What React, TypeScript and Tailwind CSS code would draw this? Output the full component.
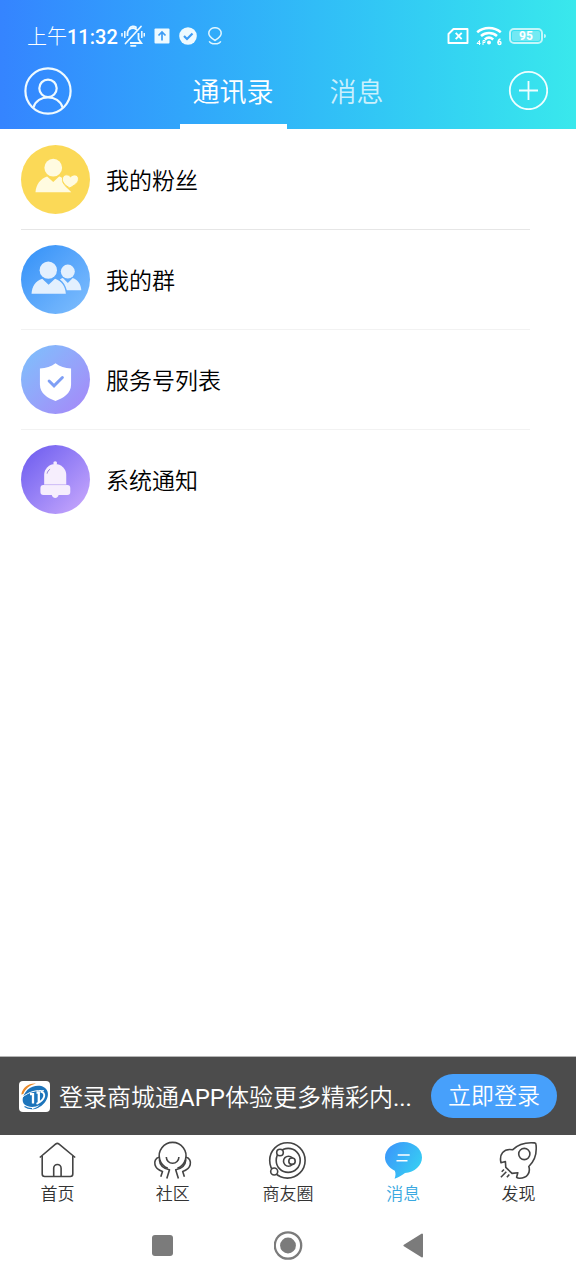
import type { ReactNode } from "react";

function MutedBell() {
  return (
    <svg className="ml-[3px] h-6 w-6" viewBox="0 0 24 24" fill="none" stroke="#effaff" strokeWidth="1.8">
      <path d="M6.500 12V9.500A5.500 5.500 0 0 1 16 5.800M17.500 9v6l2.800 4H9" />
      <path d="M8.500 4.200C10 2.300 13 1.800 15 3.200M20 2.500 4.500 19.500" strokeLinecap="round" />
      <path d="M10 21.800h4.500" strokeLinecap="round" />
      <path d="M3.800 7v7M20.800 7v7M1 9v3.500M23.300 9v3.500" strokeWidth="1.500" />
    </svg>
  );
}

function StatusBar() {
  return (
    <div className="flex h-6 items-center pl-[27px] pr-[30px] text-white">
      <span className="whitespace-nowrap pt-[2px] text-[20px] font-medium leading-6">
        <span className="font-light">上午</span>11:32
      </span>
      <MutedBell />
      <svg className="ml-[9px] h-4 w-4" viewBox="0 0 16 16">
        <rect x="0.500" y="0.500" width="15" height="15" rx="1" fill="#eefaff" />
        <path d="M8 12.500V4.500M4.500 7.500 8 4l3.500 3.500" stroke="#3d9cf5" strokeWidth="1.700" fill="none" />
      </svg>
      <svg className="ml-[9px] h-[18px] w-[18px]" viewBox="0 0 18 18">
        <circle cx="9" cy="9" r="8.800" fill="#eefaff" />
        <path d="m5 9 3 3 5.500-5.500" stroke="#3d9cf5" strokeWidth="2.200" fill="none" />
      </svg>
      <svg className="ml-[10px] h-[18px] w-4" viewBox="0 0 16 18" fill="none" stroke="#e0f6ff" strokeWidth="1.500">
        <path d="M8 13.500c-2-1.500-6.200-3.500-6.200-7.300a6.200 5.500 0 0 1 12.400 0c0 3.800-4.200 5.800-6.200 7.300z" />
        <path d="M2.300 14.200c1.200 3.500 10.200 3.500 11.400 0" />
      </svg>
      <div className="ml-auto flex items-center">
        <svg className="h-[18px] w-[22px]" viewBox="0 0 22 18" fill="none" stroke="white" strokeWidth="1.900">
          <path d="M6.500 2H20.500V16H1.500V7z" strokeLinejoin="round" />
          <path d="m8.700 5.800 6 6.400M14.700 5.800l-6 6.400" />
        </svg>
        <svg className="ml-[7px] h-5 w-[26px]" viewBox="0 0 26 20" fill="none" stroke="white" strokeWidth="2.500">
          <path d="M1.200 6.200c6.500-5.700 17.100-5.700 23.600 0M5 10c4.500-4 11.500-4 16 0M8.800 13.500c2.500-2.200 5.900-2.200 8.400 0" />
          <circle cx="13" cy="16.500" r="2" fill="white" stroke="none" />
          <path d="M3.500 19v-4.500L1 17.500h3.500M7 19v-4.500h2v2H7" strokeWidth="1" />
          <path d="M24.500 13c-1.800.5-2.500 2.200-2.500 4" strokeWidth="1.400" />
          <circle cx="23.500" cy="17" r="1.500" strokeWidth="1.400" />
        </svg>
        <div className="ml-[7px] flex items-center gap-px">
          <div className="flex h-4 w-[34px] rounded-[5px] border-2 border-white/70 p-px">
            <span className="flex flex-1 items-center justify-center rounded-[2px] bg-white/30 text-[12px] font-bold leading-none">
              95
            </span>
          </div>
          <span className="h-1 w-[2px] rounded-r bg-white/70" />
        </div>
      </div>
    </div>
  );
}

function Header() {
  return (
    <header className="bg-linear-to-r from-[#3584ff] to-[#39e8ec] pt-6">
      <StatusBar />
      <div className="grid h-[81px] grid-cols-[1fr_auto_1fr] pl-6 pr-6">
        <button aria-label="个人中心" className="mt-[19px] h-12 w-12">
          <svg viewBox="0 0 48 48" fill="none" stroke="#effaff" strokeWidth="2.200">
            <circle cx="24" cy="24" r="22.600" />
            <circle cx="24" cy="21.300" r="8.700" />
            <path d="M9.500 40.500c3.500-13.500 25.500-13.500 29 0" />
          </svg>
        </button>
        <nav className="flex gap-[30px] text-[27px] leading-9 text-white">
          <button className="border-b-[5px] border-white px-[13px] pt-[14px] font-[350]">通讯录</button>
          <button className="border-b-[5px] border-transparent px-[13px] pt-[14px] font-[350] text-white/75">消息</button>
        </nav>
        <button aria-label="添加" className="mr-1 mt-[22px] h-10 w-10 justify-self-end">
          <svg viewBox="0 0 40 40" fill="none" stroke="#effeff" strokeWidth="1.800">
            <circle cx="20.500" cy="20.500" r="18.700" />
            <path d="M20.500 11v19M11 20.500h19" />
          </svg>
        </button>
      </div>
    </header>
  );
}

function FansIcon() {
  return (
    <svg viewBox="0 0 70 70" fill="#fffbe0">
      <circle cx="32.700" cy="23" r="9" />
      <path d="M14.700 48c.5-7.500 5-14 11.800-16l6.200 5.500 6-5.500c1.500.4 2.500 1 3.300 1.700-1.500 6 4 8.500 9 14.300z" />
      <path
        d="M49.500 43.500c-4-2-7.500-5-7.500-8.800 0-4.700 5.800-6 8.300-2.300 2.700-3.500 8-2.300 8 2 0 4-4.300 6.600-8.800 9.100z"
        stroke="#fbd957"
        strokeWidth="1"
      />
    </svg>
  );
}

function GroupIcon() {
  return (
    <svg viewBox="0 0 70 70" fill="#e3f0fe">
      <circle cx="27.700" cy="25.500" r="8.800" />
      <path d="M10.700 49.500c.5-7.500 4-13 10.800-15.200l6.500 6 6.500-6c6.700 2.200 10.500 7.700 11 15.200z" />
      <circle cx="47.500" cy="27" r="7.100" />
      <path d="M39.500 35c1-.7 2-1.200 3-1.500l5 5 5-5c5 1.500 8.300 6.200 8.700 12.500H46.500c-1.200-5-3.500-8.500-7-11z" />
    </svg>
  );
}

function ShieldIcon() {
  return (
    <svg viewBox="0 0 70 70" fill="none">
      <path
        d="M35 18.500c4.500 3.500 9.500 5 15.800 5.300V40c0 9-8 14-15.800 16.700C27.200 54 19.200 49 19.200 40V23.800C25.500 23.500 30.500 22 35 18.500z"
        fill="white"
      />
      <path d="m28.500 36.500 5 5 8.500-8.500" stroke="#7f9ff5" strokeWidth="3" strokeLinecap="round" />
    </svg>
  );
}

function BellIcon() {
  return (
    <svg viewBox="0 0 70 70" fill="#f6eefd">
      <circle cx="34.700" cy="18.300" r="1.900" />
      <path d="M23.500 40V30.500a11.200 11.200 0 0 1 22.400 0V40z" />
      <rect x="19.700" y="40.600" width="30.300" height="10" rx="3" />
      <path d="M31.200 50.500h7c-.3 4.200-6.700 4.200-7 0z" />
      <path d="M26.500 29c.3-2 1.500-3.500 3-4.500" stroke="#9b86d8" strokeWidth="1" fill="none" />
      <path d="M23.500 40.300h22.400" stroke="#d9c7f5" strokeWidth="0.800" />
    </svg>
  );
}

const contacts: { label: string; tint: string; icon: ReactNode }[] = [
  { label: "我的粉丝", tint: "bg-[#fbd957]", icon: <FansIcon /> },
  { label: "我的群", tint: "bg-linear-to-br from-[#2f90f8] to-[#80befd]", icon: <GroupIcon /> },
  { label: "服务号列表", tint: "bg-linear-to-br from-[#79c2fc] to-[#a585f8]", icon: <ShieldIcon /> },
  { label: "系统通知", tint: "bg-linear-to-br from-[#6b57ee] to-[#cdaafc]", icon: <BellIcon /> },
];

function HomeIcon() {
  return (
    <>
      <path d="M.8 15.500 16.500 2.200q1.800-1.500 3.600 0L36.200 15.500" />
      <path d="M3.200 14v18q0 2.500 2.500 2.500h25.600q2.500 0 2.500-2.500V14M14.700 34.500v-8.300a3.700 3.700 0 0 1 7.400 0v8.300" />
    </>
  );
}

function CommunityIcon() {
  return (
    <>
      <path d="M13.800 26.300a13.400 13.400 0 1 1 9.600 0" />
      <path d="M12.300 15a6.200 6.200 0 0 0 12.600 0" />
      <path d="M5.300 15.300C1.300 16 .2 19.500 1 22.800c.9 3.500 3.500 5.500 7.500 6.700L6.800 34.800" />
      <path d="M5.300 17.500c.3 4.500 3.200 9 10.200 10.300l-2.700 8.700" />
      <path d="M31.900 15.300c4 .7 5.100 4.200 4.300 7.500-.9 3.500-3.500 5.500-7.500 6.700l1.700 5.300" />
      <path d="M31.900 17.500c-.3 4.500-3.200 9-10.200 10.300l2.700 8.700" />
    </>
  );
}

function CircleIcon() {
  return (
    <>
      <circle cx="18.400" cy="18.400" r="17.700" />
      <circle cx="19.200" cy="18.400" r="12" />
      <circle cx="19.500" cy="19.200" r="5" />
      <circle cx="23" cy="19.200" r="3.200" fill="white" />
      <circle cx="11" cy="10.500" r="3.300" fill="white" />
      <circle cx="5.200" cy="29.500" r="3.500" fill="white" />
    </>
  );
}

function MessageIcon() {
  return (
    <>
      <defs>
        <linearGradient id="bubble" x1="0" y1="0" x2="1" y2="0.600">
          <stop offset="0" stopColor="#3b92fb" />
          <stop offset="1" stopColor="#37cdf3" />
        </linearGradient>
      </defs>
      <path
        d="M18.500 0C8.300 0 0 6.900 0 15.500c0 5.500 4 10.300 9.800 13.200 1.100 2.500.9 5-.2 8 4.400-1.700 7.800-3.600 10.400-5.700C29.500 30.300 37 23.700 37 15.500 37 6.900 28.700 0 18.500 0z"
        fill="url(#bubble)"
        stroke="none"
      />
      <path d="M12.700 13h12M11.500 18.700h11" stroke="white" strokeWidth="1.500" />
    </>
  );
}

function RocketIcon() {
  return (
    <>
      <path d="M12.500 7.800C18.500 2 26.500.2 34.500.9q1.400.1 1.500 1.500C37 11 35.300 18.500 28.800 24.500c2 6.300-1.800 12-9.500 11.800q-1.600-.2-2.700-1l1.200-4.600-5.800.7-6.200-6-.4-5.900-4.400 1.300C-1 12.500 3.500 6.200 12.500 7.800z" />
      <circle cx="24.300" cy="12" r="5.600" />
      <path d="m4 27.500-2.300 2.300M6.300 29.800.9 35.300M9.300 32.500l-2.400 2.800" />
    </>
  );
}

const tabs: { label: string; active?: boolean; icon: ReactNode }[] = [
  { label: "首页", icon: <HomeIcon /> },
  { label: "社区", icon: <CommunityIcon /> },
  { label: "商友圈", icon: <CircleIcon /> },
  { label: "消息", active: true, icon: <MessageIcon /> },
  { label: "发现", icon: <RocketIcon /> },
];

function LoginBanner() {
  return (
    <aside className="flex h-[79px] items-center border-t border-[#b5b5b5] bg-[#4c4c4c] px-[19px]">
      <svg className="h-[31px] w-[31px] shrink-0" viewBox="0 0 31 31">
        <rect width="31" height="31" rx="4" fill="white" />
        <path d="M2.300 13.500C3.500 6 10 1.800 17 2.500 11 4 6.500 7.500 4.300 13z" fill="#e98a2b" />
        <path
          d="M8.500 8.800C15 3.200 26 3.300 28.500 10.500 31 19 21.500 28.500 12.500 28.300c3.500-.8 6-2.300 8.200-4.300-5 2.600-11.500 2.600-15.200-.5C2.500 20.500 3 15 8.500 8.800z"
          fill="#1c74bb"
        />
        <path d="M3 16.500C10 10.500 18 8.800 25 9.800" stroke="white" strokeWidth="1" fill="none" />
        <path d="M11 13.200h3v9.300M17.500 11.500h2.300V21" stroke="white" strokeWidth="2.300" fill="none" />
        <path d="M21.500 10.500c6 1 5 8.500-4 12.300" stroke="white" strokeWidth="1.900" fill="none" />
        <path d="M5.500 25.500c2.500 1.700 5 2.300 7.500 2.200" stroke="#1c74bb" strokeWidth="1.200" fill="none" />
      </svg>
      <p className="ml-[9px] flex-1 whitespace-nowrap pt-1 text-[24px] font-[350] leading-9 text-white">
        登录商城通<span className="font-normal">APP</span>体验更多精彩内<span className="font-normal">...</span>
      </p>
      <button className="h-11 shrink-0 rounded-full bg-[#47a0fb] px-[17px] pt-px text-[23px] font-[350] leading-none text-white">
        立即登录
      </button>
    </aside>
  );
}

function SystemNav() {
  return (
    <div className="flex h-[68px] items-center justify-center gap-[97px] pb-[2px]">
      <button aria-label="最近任务" className="flex h-[29px] w-[29px] items-center justify-center">
        <span className="h-[21px] w-[21px] rounded-[3px] bg-[#7b7b7b]" />
      </button>
      <button aria-label="主屏幕" className="h-[29px] w-[29px]">
        <svg viewBox="0 0 29 29">
          <circle cx="14" cy="14.500" r="13.200" fill="none" stroke="#7b7b7b" strokeWidth="2.300" />
          <circle cx="14" cy="14.500" r="7.900" fill="#7b7b7b" />
        </svg>
      </button>
      <button aria-label="返回" className="h-[29px] w-[29px]">
        <svg viewBox="0 0 29 29">
          <path d="M22 3.500v22L4.400 14.500z" fill="#7b7b7b" stroke="#7b7b7b" strokeWidth="2" strokeLinejoin="round" />
        </svg>
      </button>
    </div>
  );
}

export default function App() {
  return (
    <div className="flex min-h-screen flex-col bg-white font-[Roboto,'Noto_Sans_CJK_SC',sans-serif]">
      <Header />
      <main className="flex-1 pt-px">
        <ul className="ml-[21px] mr-[46px]">
          {contacts.map((c) => (
            <li key={c.label} className="border-b border-[#f2f2f2] first:border-[#e6e6e6] last:border-transparent">
              <a href="#" className="flex items-center gap-4 py-[15px]">
                <span className={`h-[69px] w-[69px] shrink-0 rounded-full ${c.tint}`}>{c.icon}</span>
                <span className="pt-1 text-[23px] font-[350] leading-8 text-black">{c.label}</span>
              </a>
            </li>
          ))}
        </ul>
      </main>
      <LoginBanner />
      <nav className="grid h-[77px] grid-cols-5 pt-[7px]">
        {tabs.map((t) => (
          <a key={t.label} href="#" className="flex flex-col items-center gap-[3px]">
            <svg
              className="h-[37px] w-[37px] overflow-visible"
              viewBox="0 0 37 37"
              fill="none"
              stroke="#444444"
              strokeWidth="1.600"
              strokeLinejoin="round"
            >
              {t.icon}
            </svg>
            <span className={`text-[17px] font-[350] leading-6 ${t.active ? "text-[#3aa8e0]" : "text-[#333333]"}`}>
              {t.label}
            </span>
          </a>
        ))}
      </nav>
      <SystemNav />
    </div>
  );
}
